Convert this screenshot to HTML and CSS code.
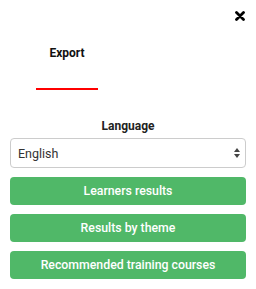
FILE: index.html
```html
<!DOCTYPE html>
<html>
<head>
<meta charset="utf-8">
<link rel="stylesheet" href="styles.css">
</head>
<body>
<div class="panel">
  <div class="top">
    <svg class="close" width="10" height="10" viewBox="0 0 10 10"><path d="M1.5 1.5 L8.5 8.5 M8.5 1.5 L1.5 8.5" stroke="#000" stroke-width="2.8" stroke-linecap="round"/></svg>
  </div>
  <div class="tabs">
    <div class="tab active">Export</div>
  </div>
  <div class="content">
    <div class="label">Language</div>
    <div class="select">
      <span>English</span>
      <svg class="arrows" width="6" height="10" viewBox="0 0 6 10"><path d="M3 0 L6 4 L0 4 Z M3 10 L6 6 L0 6 Z" fill="#444"/></svg>
    </div>
    <button class="btn">Learners results</button>
    <button class="btn">Results by theme</button>
    <button class="btn">Recommended training courses</button>
  </div>
</div>
</body>
</html>
```
FILE: styles.css
```css
html, body {
  margin: 0;
  padding: 0;
  background: #fff;
  font-family: Roboto, "Liberation Sans", sans-serif;
}
.panel {
  width: 256px;
  height: 289px;
  box-sizing: border-box;
  padding: 0 10px;
}
.top {
  display: flex;
  justify-content: flex-end;
  height: 30px;
  padding-top: 11px;
  box-sizing: border-box;
}
.close {
  display: block;
  margin-right: 1px;
}
.tabs {
  display: flex;
  padding-left: 26px;
}
.tab {
  width: 62px;
  height: 60px;
  box-sizing: border-box;
  text-align: center;
  font-size: 12px;
  font-weight: 700;
  color: #111;
  padding-top: 16px;
  border-bottom: 2px solid #f00;
}
.content {
  display: flex;
  flex-direction: column;
  padding-top: 28px;
}
.label {
  text-align: center;
  font-size: 12px;
  font-weight: 700;
  color: #222;
  line-height: 16px;
}
.select {
  margin-top: 4px;
  height: 30px;
  box-sizing: border-box;
  border: 1px solid #ccc;
  border-radius: 4px;
  display: flex;
  align-items: center;
  justify-content: space-between;
  padding: 0 4px 0 7px;
  font-size: 12.5px;
  color: #333;
}
.arrows {
  margin-right: 1px;
}
.btn {
  margin-top: 9px;
  height: 28px;
  border: none;
  border-radius: 4px;
  background: #50b868;
  color: #fff;
  font-family: Roboto, "Liberation Sans", sans-serif;
  font-size: 12.3px;
  font-weight: 500;
  padding: 0;
}
```
